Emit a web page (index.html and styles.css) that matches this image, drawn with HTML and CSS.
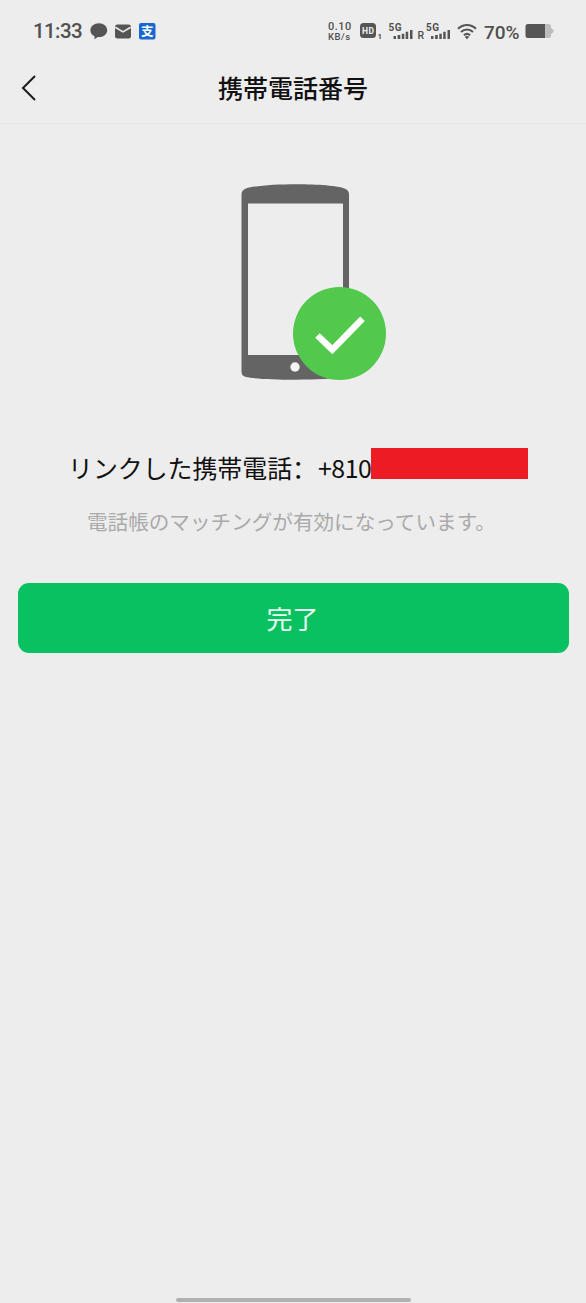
FILE: index.html
```html
<!DOCTYPE html>
<html lang="ja">
<head>
<meta charset="utf-8">
<title>携帯電話番号</title>
<link rel="stylesheet" href="styles.css">
</head>
<body>
<div class="screen">
  <header class="status">
    <span class="time">11:33</span>
    <svg class="notices" width="66" height="20" viewBox="0 0 66 20">
      <path class="ink" d="M9 2.2C4.1 2.2.4 5.2.4 9.2c0 2.7 1.6 4.8 4.1 6v3l3.4-2.1c5.2.3 9.3-2.7 9.3-6.900 0-4-3.500-7-8.200-7z"/>
      <rect class="ink" x="25" y="3.5" width="16" height="14" rx="2.5"/>
      <path class="cut" d="M25.3 6.3l7.7 4.6 7.7-4.6"/>
      <rect class="pay" x="49" y="2" width="16.5" height="16.5" rx="2"/>
      <text class="pay-mark" x="51" y="15">支</text>
    </svg>
    <div class="speed"><span>0.10</span><span class="unit">KB/s</span></div>
    <svg class="signal" width="94" height="24" viewBox="0 0 94 24">
      <rect class="ink" x="1" y="4" width="16" height="15" rx="3.5"/>
      <text class="hd" x="3" y="15" textLength="12">HD</text>
      <text class="tiny" x="18.500" y="20">1</text>
      <text class="gen" x="29.500" y="12" textLength="13">5G</text>
      <path class="ink" d="M34.500 17h2.500v3h-2.500zM38.600 16h2.700v4h-2.700zM42.800 14.800h2.500v5.200h-2.500zM46.700 12.800h2.500v7.200h-2.500zM51 11h2.500v9h-2.500z"/>
      <text class="roam" x="58.500" y="20">R</text>
      <text class="gen" x="67" y="12" textLength="13">5G</text>
      <path class="ink" d="M72 17h2.500v3h-2.500zM76.100 16h2.700v4h-2.700zM80.300 14.800h2.500v5.200h-2.500zM84.200 12.800h2.500v7.200h-2.500zM88.500 11h2.500v9h-2.500z"/>
    </svg>
    <svg class="wifi" width="20" height="17" viewBox="0 0 20 17">
      <path d="M1 5.800c5.200-5.100 12.800-5.100 18 0M4 9.100c3.500-3.400 8.500-3.400 12 0M6.900 12.200c2-1.700 4.200-1.700 6.200 0"/>
      <path class="ink" d="M7.700 13.700q2.300-1.500 4.600 0L10 16.200z"/>
    </svg>
    <span class="percent">70%</span>
    <svg class="battery" width="29" height="16" viewBox="0 0 29 16">
      <path class="rest" d="M3 1h20.500a2.500 2.500 0 0 1 2.500 2.500V5l2.500 2v2L26 11v1.500a2.500 2.500 0 0 1-2.500 2.500H3z"/>
      <path class="ink" d="M3 1h17v14H3a2.500 2.500 0 0 1-2.500-2.500v-9A2.500 2.500 0 0 1 3 1z"/>
    </svg>
  </header>

  <nav class="bar">
    <svg class="back" width="16" height="28" viewBox="0 0 16 28"><path d="M14 2L2 14l12 12"/></svg>
    <h1 class="title">携帯電話番号</h1>
  </nav>

  <main class="content">
    <svg class="phone" width="146" height="198" viewBox="0 0 146 198">
      <path class="body" fill-rule="evenodd" d="M1.500 11.500Q1.500 7 6 5.500C22 -.300 92 -.300 104.500 5.500Q109 7 109 11.500V188.500Q109 193 104.500 194C88 197.500 22 197.500 6 194Q1.500 193 1.500 188.500zM8 20.500V172H103V20.500z"/>
      <circle class="home" cx="55" cy="184" r="4.700"/>
      <circle class="badge" cx="99.500" cy="150.500" r="46.500"/>
      <path class="check" d="M77.500 152.500L92.300 166.700 122.500 135.800"/>
    </svg>
    <p class="linked"><span class="label">リンクした携帯電話<span class="colon" lang="zh-CN">：</span></span><span class="number">+810</span><span class="mask"></span></p>
    <p class="note">電話帳のマッチングが有効になっています。</p>
    <button class="done" type="button">完了</button>
  </main>
  <div class="handle"></div>
</div>
</body>
</html>
```
FILE: styles.css
```css
* { box-sizing: border-box; }
body {
  margin: 0;
  background: #ededed;
  color: #111;
  font-family: "Noto Sans CJK JP", sans-serif;
}
.screen {
  display: flex;
  flex-direction: column;
  width: 586px;
  height: 1303px;
  overflow: hidden;
}
.status {
  display: flex;
  align-items: center;
  height: 62px;
  padding-left: 33px;
  color: #505050;
  font-family: Roboto, sans-serif;
  font-weight: 500;
}
.time { width: 57px; font-size: 20.500px; letter-spacing: -.6px; }
.ink { fill: #555; }
.cut { fill: none; stroke: #ededed; stroke-width: 1.600; }
.pay { fill: #1768d1; }
.pay-mark { fill: #fff; font: 700 12.500px "Noto Sans CJK SC", sans-serif; }
.speed {
  display: flex;
  flex-direction: column;
  width: 31px;
  margin-left: 172px;
  font-size: 11px;
  line-height: 11px;
  letter-spacing: .5px;
}
.unit { font-size: 9.500px; line-height: 10px; }
.hd { fill: #eee; font: 700 8.500px Roboto, sans-serif; }
.tiny { fill: #505050; font: 700 8px Roboto, sans-serif; }
.gen { fill: #505050; font: 700 10px Roboto, sans-serif; }
.roam { fill: #505050; font: 500 10.500px Roboto, sans-serif; }
.wifi { margin-left: 4px; fill: none; stroke: #555; stroke-width: 2.100; }
.wifi .ink { stroke: none; }
.percent { width: 41px; margin-left: 7px; padding-top: 2px; font-size: 19px; }
.rest { fill: #bcbcbc; }
.bar {
  display: grid;
  grid-template-columns: 60px 1fr 60px;
  align-items: center;
  height: 62px;
  padding-bottom: 10px;
  border-bottom: 1px solid #e7e7e7;
}
.back { margin-left: 21px; fill: none; stroke: #1b1b1b; stroke-width: 2; }
.title {
  margin: -2px 0 0;
  text-align: center;
  font-size: 25px;
  font-weight: 500;
  line-height: 36px;
}
.content { display: flex; flex: 1; flex-direction: column; }
.phone { margin: 59px 0 0 240px; }
.body { fill: #646464; }
.home { fill: #f5f5f5; }
.badge { fill: #52c84d; }
.check { fill: none; stroke: #fff; stroke-width: 6.500; stroke-linejoin: miter; }
.linked {
  display: flex;
  height: 40px;
  margin: 67px 0 0 68px;
  font-size: 24.900px;
  line-height: 39px;
  white-space: nowrap;
}
.label { width: 250px; }
.colon { font-family: "Noto Sans CJK SC", sans-serif; }
.number { width: 53px; overflow: hidden; letter-spacing: -.5px; }
.mask { width: 157px; height: 31px; background: #ed1c24; }
.note {
  margin: 18px 0 0 87px;
  color: #aaa;
  font-size: 20.600px;
  line-height: 30px;
  white-space: nowrap;
}
.done {
  width: 551px;
  height: 70px;
  margin: 47px 0 0 18px;
  padding: 0 2px 2px 0;
  border: 0;
  border-radius: 11px;
  background: #09c160;
  color: #e9fff1;
  font: 400 26px "Noto Sans CJK JP", sans-serif;
}
.handle {
  width: 235px;
  height: 4px;
  margin: 0 0 1px 176px;
  border-radius: 2px;
  background: #b0b0b0;
}
```
